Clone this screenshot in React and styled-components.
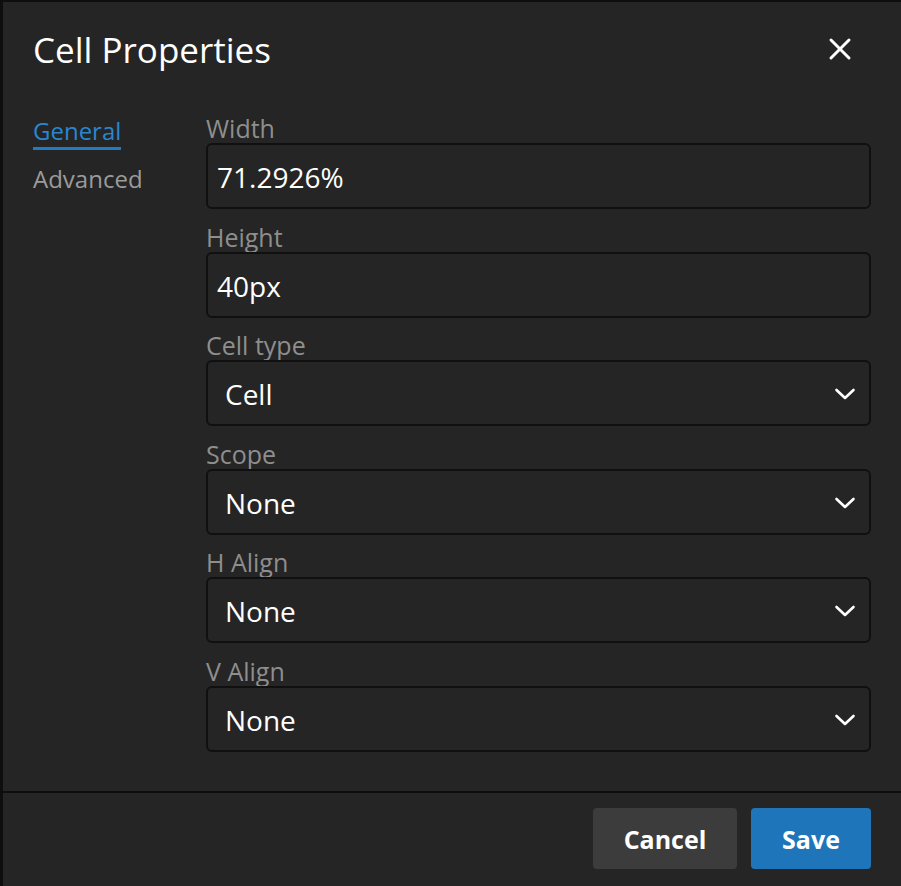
import styled, { createGlobalStyle } from "styled-components";
import { useState } from "react";

const GlobalStyle = createGlobalStyle`
    html, body {
        margin: 0;
        padding: 0;
        background: #101010;
        font-family: "Open Sans", "Noto Sans", sans-serif;
    }
    * { box-sizing: border-box; }
`

const Dialog = styled.div`
    height: 886px;
    background: #252525;
    border-left: 3px solid #0e0e0e;
    border-top: 2px solid #0e0e0e;
    display: flex;
    flex-direction: column;
    overflow: hidden;
`
const Header = styled.div`
    display: flex;
    justify-content: space-between;
    align-items: flex-start;
    padding: 25px 39px 0 30px;
    height: 103px;
`
const Title = styled.h1`
    margin: 0;
    font-weight: 400;
    font-size: 35px;
    color: #ffffff;
    line-height: 46px;
`
const CloseButton = styled.button`
    background: none;
    border: none;
    padding: 0;
    width: 44px;
    height: 44px;
    display: flex;
    align-items: center;
    justify-content: center;
    cursor: pointer;
`
const Body = styled.div`
    display: grid;
    grid-template-columns: 173px 1fr;
    padding: 10px 30px 0 30px;
    flex: 1;
`
const TabList = styled.div`
    display: flex;
    flex-direction: column;
    align-items: flex-start;
    gap: 13px;
`
const Tab = styled.button`
    background: none;
    border: none;
    padding: 0;
    font-family: inherit;
    font-size: 24px;
    line-height: 32px;
    color: ${props => props.active ? '#2a86cf' : '#9b9b9b'};
    border-bottom: 3px solid ${props => props.active ? '#1f7cc4' : 'transparent'};
    cursor: pointer;
`
const Fields = styled.div`
    display: flex;
    flex-direction: column;
    gap: 14.5px;
`
const Field = styled.label`
    display: flex;
    flex-direction: column;
    gap: 2px;
`
const Label = styled.span`
    font-size: 25px;
    line-height: 26px;
    color: #8e8e8e;
`
const Box = styled.div`
    height: 66px;
    border: 2px solid #101010;
    border-radius: 6px;
    background: #252525;
    display: flex;
    align-items: center;
    justify-content: space-between;
    padding: 2px ${props => props.select ? '13px' : '9px'} 0 ${props => props.select ? '17px' : '9px'};
    color: #ffffff;
    font-size: 28px;
`
const Footer = styled.div`
    border-top: 2px solid #0e0e0e;
    height: 95px;
    display: flex;
    justify-content: flex-end;
    align-items: flex-start;
    gap: 14px;
    padding: 15px 30px 0 0;
`
const Button = styled.button`
    height: 61px;
    width: ${props => props.primary ? '120px' : '144px'};
    border: none;
    border-radius: 4px;
    background: ${props => props.primary ? '#1f75ba' : '#3c3c3c'};
    color: #ffffff;
    font-family: inherit;
    font-weight: 700;
    font-size: 25px;
    cursor: pointer;
`

function Chevron() {
    return (
        <svg width="22" height="14" viewBox="0 0 22 14" fill="none">
            <path d="M2.5 3 L11 11 L19.5 3" stroke="#ffffff" strokeWidth="2.6" strokeLinecap="round" strokeLinejoin="round" />
        </svg>
    )
}

function App() {
    const [tab, setTab] = useState('general')
    const selects = [
        { label: 'Cell type', value: 'Cell' },
        { label: 'Scope', value: 'None' },
        { label: 'H Align', value: 'None' },
        { label: 'V Align', value: 'None' },
    ]
    return (
        <>
            <GlobalStyle />
            <Dialog>
                <Header>
                    <Title>Cell Properties</Title>
                    <CloseButton aria-label="Close">
                        <svg width="24" height="24" viewBox="0 0 24 24" fill="none">
                            <path d="M3 3 L21 21 M21 3 L3 21" stroke="#ffffff" strokeWidth="3" strokeLinecap="round" />
                        </svg>
                    </CloseButton>
                </Header>
                <Body>
                    <TabList>
                        <Tab active={tab === 'general'} onClick={() => setTab('general')}>General</Tab>
                        <Tab active={tab === 'advanced'} onClick={() => setTab('advanced')}>Advanced</Tab>
                    </TabList>
                    <Fields>
                        <Field>
                            <Label>Width</Label>
                            <Box>71.2926%</Box>
                        </Field>
                        <Field>
                            <Label>Height</Label>
                            <Box>40px</Box>
                        </Field>
                        {selects.map(s => (
                            <Field key={s.label}>
                                <Label>{s.label}</Label>
                                <Box select>
                                    <span>{s.value}</span>
                                    <Chevron />
                                </Box>
                            </Field>
                        ))}
                    </Fields>
                </Body>
                <Footer>
                    <Button>Cancel</Button>
                    <Button primary>Save</Button>
                </Footer>
            </Dialog>
        </>
    )
}

export default App;
